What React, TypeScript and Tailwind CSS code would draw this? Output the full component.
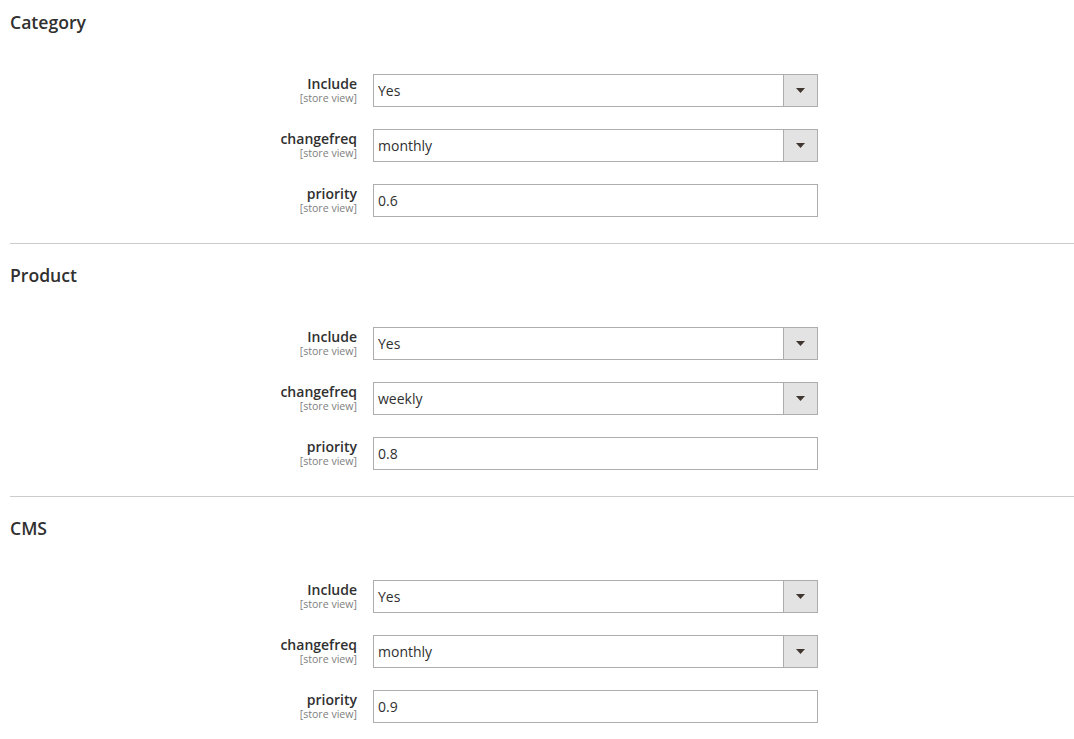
import React from "react";

type Field = {
  label: string;
  value: string;
  select?: boolean;
};

type Section = {
  title: string;
  fields: Field[];
};

const sections: Section[] = [
  {
    title: "Category",
    fields: [
      { label: "Include", value: "Yes", select: true },
      { label: "changefreq", value: "monthly", select: true },
      { label: "priority", value: "0.6" },
    ],
  },
  {
    title: "Product",
    fields: [
      { label: "Include", value: "Yes", select: true },
      { label: "changefreq", value: "weekly", select: true },
      { label: "priority", value: "0.8" },
    ],
  },
  {
    title: "CMS",
    fields: [
      { label: "Include", value: "Yes", select: true },
      { label: "changefreq", value: "monthly", select: true },
      { label: "priority", value: "0.9" },
    ],
  },
];

function Row({ field }: { field: Field }) {
  return (
    <div className="flex items-start gap-4">
      <div className="w-[347px] pt-[2px] text-right">
        <div className="text-[14px] leading-[16px] font-semibold text-[#303030]">
          {field.label}
        </div>
        <div className="text-[10.6px] leading-[13px] text-[#808080]">
          [store view]
        </div>
      </div>
      <div className="flex h-[33px] w-[445px] border border-[#adadad] bg-white">
        <div className="flex flex-1 items-center pl-[4px] text-[14px] text-[#303030]">
          {field.value}
        </div>
        {field.select && (
          <div className="flex w-[34px] items-center justify-center border-l border-[#adadad] bg-[#e3e3e3]">
            <svg width="9" height="5" viewBox="0 0 9 5">
              <path d="M0 0 L9 0 L4.5 5 Z" fill="#41362f" />
            </svg>
          </div>
        )}
      </div>
    </div>
  );
}

export default function App() {
  return (
    <div
      className="min-h-screen bg-white pl-[10px]"
      style={{ fontFamily: "'Open Sans', 'Liberation Sans', sans-serif" }}
    >
      {sections.map((section, i) => (
        <div
          key={section.title}
          className={i > 0 ? "border-t border-[#cccccc] pt-[9px]" : ""}
        >
          <h2 className="pt-[10px] text-[17.6px] leading-[24px] font-semibold text-[#303030]">
            {section.title}
          </h2>
          <div className="mt-[40px] flex flex-col gap-[22px] pb-[26px]">
            {section.fields.map((f) => (
              <Row key={f.label} field={f} />
            ))}
          </div>
        </div>
      ))}
    </div>
  );
}
